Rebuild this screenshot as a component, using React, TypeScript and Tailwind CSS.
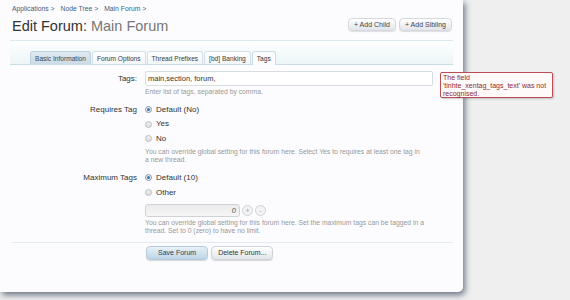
const tabs = [
  { label: "Basic Information", kind: "first" },
  { label: "Forum Options", kind: "normal" },
  { label: "Thread Prefixes", kind: "normal" },
  { label: "[bd] Banking", kind: "normal" },
  { label: "Tags", kind: "active" },
];

function Radio({ checked, label }: { checked?: boolean; label: string }) {
  return (
    <div className="flex items-center h-[14.5px]">
      <span
        className={
          "w-[7px] h-[7px] rounded-full border flex items-center justify-center " +
          (checked
            ? "border-[#7f99b3] bg-[#e9f1f8]"
            : "border-[#b8bec4] bg-gradient-to-b from-[#f2f2f2] to-[#dcdcdc]")
        }>
        {checked && <span className="w-[3px] h-[3px] rounded-full bg-[#3f6fa3]" />}
      </span>
      <span className="ml-[4px] text-[8px] text-[#333]">{label}</span>
    </div>
  );
}

function Hint({ lines }: { lines: string[] }) {
  return (
    <div className="mt-[2px] text-[6.8px] leading-[7.5px] text-[#999] whitespace-nowrap">
      {lines.map((l) => (
        <div key={l}>{l}</div>
      ))}
    </div>
  );
}

export default function App() {
  return (
    <div className="relative w-[570px] h-[300px] bg-[#efefef] overflow-hidden font-['Liberation_Sans',Arial,sans-serif]">
      {/* Main panel */}
      <div className="w-[463px] h-[292px] bg-[#fcfcfe] rounded-br-[5px] shadow-[2px_3px_6px_rgba(70,85,105,0.8)] px-[10px]">
        {/* Header */}
        <div className="flex justify-between items-start">
          <div>
            <div className="pt-[5px] pl-[2px] text-[6.8px] leading-[8px] text-[#3b5f7e] flex gap-[6px]">
              <span>Applications &gt;</span>
              <span>Node Tree &gt;</span>
              <span>Main Forum &gt;</span>
            </div>
            <div className="mt-[5px] pl-[2px] text-[14.5px] leading-[17px] text-[#333]">
              Edit Forum: <span className="text-[#777]">Main Forum</span>
            </div>
          </div>
          <div className="flex gap-[3px] mt-[18px] mr-[1px]">
            <div className="h-[13px] px-[5px] rounded-[4px] border border-[#d4d8dc] bg-gradient-to-b from-white to-[#e3e6ea] shadow-[0_1px_1px_rgba(0,0,0,0.12)] text-[7px] leading-[11px] text-[#444]">
              + Add Child
            </div>
            <div className="h-[13px] px-[5px] rounded-[4px] border border-[#d4d8dc] bg-gradient-to-b from-white to-[#e3e6ea] shadow-[0_1px_1px_rgba(0,0,0,0.12)] text-[7px] leading-[11px] text-[#444]">
              + Add Sibling
            </div>
          </div>
        </div>

        {/* Tabs */}
        <div className="mt-[5px] border-t border-[#dde8ee] h-[25px] bg-gradient-to-b from-white to-[#ecf5f7] border-b border-b-[#c9dde6] flex items-end pl-[20px] gap-[1px]">
          {tabs.map((t) => (
            <div
              key={t.label}
              className={
                "px-[4px] text-[6.6px] rounded-t-[3px] border border-b-0 " +
                (t.kind === "first"
                  ? "h-[13px] leading-[13px] bg-gradient-to-b from-[#dfe9f0] to-[#ccdbe6] border-[#bfd1dd] text-[#2d4a5e]"
                  : t.kind === "active"
                    ? "h-[14px] leading-[14px] -mb-[1px] bg-[#fcfcfe] border-[#c9dde6] text-[#333]"
                    : "h-[13px] leading-[13px] bg-gradient-to-b from-white to-[#f1f6f8] border-[#d3e0e8] text-[#3a3a3a]")
              }>
              {t.label}
            </div>
          ))}
        </div>

        {/* Form */}
        <div className="flex flex-col">
          <div className="flex mt-[6px]">
            <div className="w-[127px] mr-[8px] text-right text-[8px] leading-[15px] text-[#333]">Tags:</div>
            <div>
              <div className="w-[288px] h-[15px] border border-[#d8dde2] rounded-[2px] bg-white pl-[2px] text-[7.5px] leading-[13px] text-[#333]">
                main,section, forum,
              </div>
              <Hint lines={["Enter list of tags, separated by comma."]} />
            </div>
          </div>

          <div className="flex mt-[7px]">
            <div className="w-[127px] mr-[8px] text-right text-[8px] leading-[14.5px] text-[#333]">Requires Tag</div>
            <div>
              <Radio checked label="Default (No)" />
              <Radio label="Yes" />
              <Radio label="No" />
              <Hint
                lines={[
                  "You can override global setting for this forum here. Select Yes to requires at least one tag in",
                  "a new thread.",
                ]}
              />
            </div>
          </div>

          <div className="flex mt-[7px]">
            <div className="w-[127px] mr-[8px] text-right text-[8px] leading-[15px] text-[#333]">Maximum Tags</div>
            <div>
              <div className="flex flex-col [&>div]:h-[15px]">
                <Radio checked label="Default (10)" />
                <Radio label="Other" />
              </div>
              <div className="flex items-center mt-[3.5px] gap-[2px]">
                <div className="w-[95px] h-[13px] border border-[#cfd3d7] rounded-[3px] bg-gradient-to-b from-[#ececec] to-[#f6f6f6] text-right pr-[3px] text-[7.5px] leading-[11px] italic text-[#555]">
                  0
                </div>
                <div className="w-[11px] h-[11px] rounded-full border border-[#cfd3d7] bg-[#f3f3f3] text-[7px] leading-[9px] text-center text-[#aaa]">
                  +
                </div>
                <div className="w-[11px] h-[11px] rounded-full border border-[#cfd3d7] bg-[#f3f3f3] text-[7px] leading-[9px] text-center text-[#aaa]">
                  -
                </div>
              </div>
              <div className="mt-[2px] text-[6.8px] leading-[8px] text-[#999] whitespace-nowrap">
                <div>You can override global setting for this forum here. Set the maximum tags can be tagged in a</div>
                <div>thread. Set to 0 (zero) to have no limit.</div>
              </div>
            </div>
          </div>

          <div className="mt-[7px] border-t border-[#e1ebf0] ml-[2px]" />

          <div className="flex mt-[3px] pl-[136px] gap-[3px]">
            <div className="h-[14px] px-[11px] rounded-[4px] border border-[#b5cbdb] bg-gradient-to-b from-[#e8f1f7] to-[#bcd4e6] shadow-[0_1px_1px_rgba(0,0,0,0.15)] text-[7px] leading-[12px] text-[#2d3e4e]">
              Save Forum
            </div>
            <div className="h-[14px] px-[6px] rounded-[4px] border border-[#cfd3d8] bg-gradient-to-b from-white to-[#e2e5e9] shadow-[0_1px_1px_rgba(0,0,0,0.15)] text-[7px] leading-[12px] text-[#333]">
              Delete Forum...
            </div>
          </div>
        </div>
      </div>

      {/* Validation error */}
      <div className="absolute left-[440px] top-[72px] w-[113px] h-[26px] border border-[#b94c55] rounded-[2px] bg-[#fffafa] shadow-[1px_1px_2px_rgba(0,0,0,0.2)] px-[2px] pt-[1px] text-[7px] leading-[7.8px] text-[#8a2a33]">
        <div>The field</div>
        <div className="whitespace-nowrap">'tinhte_xentag_tags_text' was not</div>
        <div>recognised.</div>
      </div>
    </div>
  );
}
